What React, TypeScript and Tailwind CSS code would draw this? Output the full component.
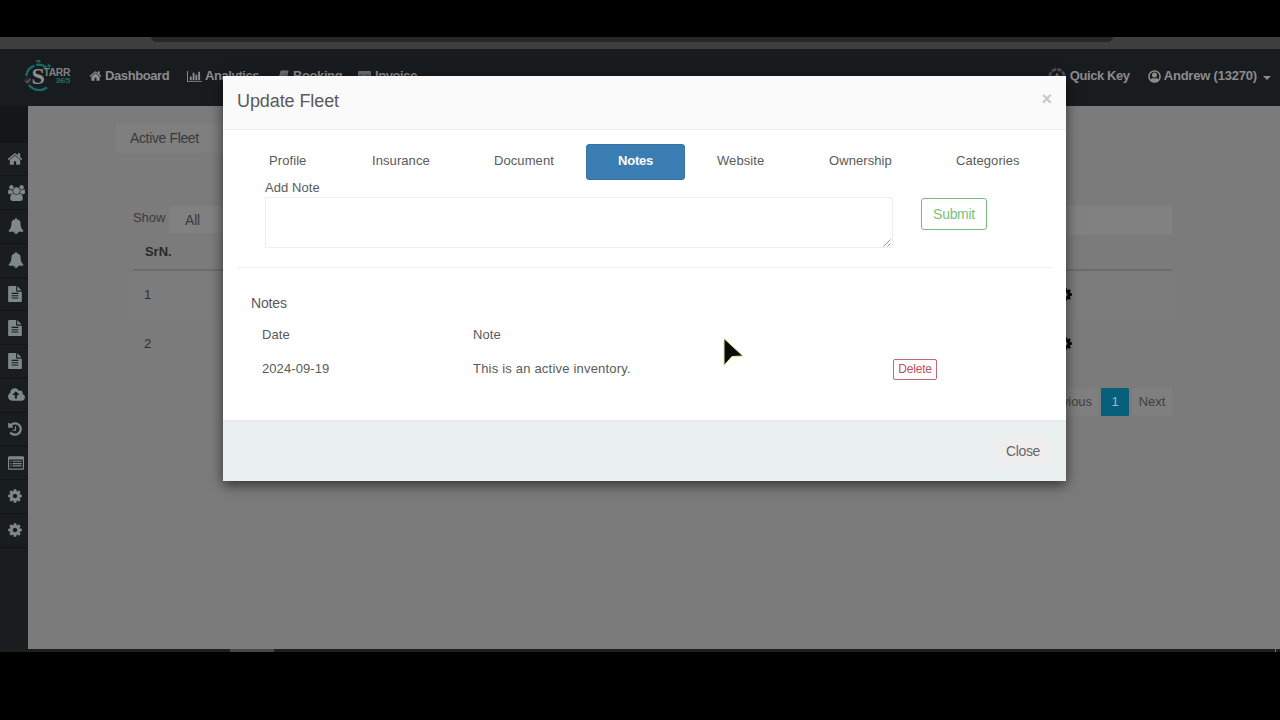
import type { ReactNode } from "react";

const HOME =
  "M1472 992v480q0 26-19 45t-45 19h-384v-384h-256v384h-384q-26 0-45-19t-19-45v-480q0-1 .5-3t.5-3l575-474 575 474q1 2 1 6zm223-69l-62 74q-8 9-21 11h-3q-13 0-21-7l-692-577-692 577q-12 8-24 7-13-2-21-11l-62-74q-8-10-7-23.5t11-21.5l719-599q32-26 76-26t76 26l244 204v-195q0-14 9-23t23-9h192q14 0 23 9t9 23v408l219 182q10 8 11 21.5t-7 23.5z";
const USERS =
  "M657 896q-162 5-265 128h-134q-82 0-138-40.5t-56-118.5q0-353 124-353 6 0 43.5 21t97.5 42.5 119 21.5q67 0 133-23-5 37-5 66 0 159 93 286zm1071 637q0 120-73 189.5t-194 69.5h-874q-121 0-194-69.5t-73-189.5q0-53 3.5-103.5t14-109 26.5-108.5 43-97.5 62-81 85.5-53.5 111.5-20q10 0 43 21.5t73 48 107 48 135 21.5 135-21.5 107-48 73-48 43-21.5q61 0 111.5 20t85.5 53.5 62 81 43 97.5 26.5 108.5 14 109 3.5 103.5zm-1024-1277q0 106-75 181t-181 75-181-75-75-181 75-181 181-75 181 75 75 181zm704 384q0 159-112.5 271.5t-271.5 112.5-271.5-112.5-112.5-271.5 112.5-271.5 271.5-112.5 271.5 112.5 112.5 271.5zm576 225q0 78-56 118.5t-138 40.5h-134q-103-123-265-128 93-127 93-286 0-29-5-66 66 23 133 23 59 0 119-21.5t97.5-42.5 43.5-21q124 0 124 353zm-128-609q0 106-75 181t-181 75-181-75-75-181 75-181 181-75 181 75 75 181z";
const BELL =
  "M912 1696q0-16-16-16-59 0-101.5-42.5t-42.5-101.5q0-16-16-16t-16 16q0 73 51.5 124.5t124.5 51.5q16 0 16-16zm816-288q0 52-38 90t-90 38h-448q0 106-75 181t-181 75-181-75-75-181h-448q-52 0-90-38t-38-90q50-42 91-88t85-119.5 74.5-158.5 50-206 19.5-260q0-152 117-282.5t307-158.5q-8-19-8-39 0-40 28-68t68-28 68 28 28 68q0 20-8 39 190 28 307 158.5t117 282.5q0 139 19.5 260t50 206 74.5 158.5 85 119.5 91 88z";
const FILE =
  "M1596 476q14 14 28 36h-472v-472q22 14 36 28zm-476 164h544v1056q0 40-28 68t-68 28h-1344q-40 0-68-28t-28-68v-1600q0-40 28-68t68-28h800v544q0 40 28 68t68 28zm160 736v-64q0-14-9-23t-23-9h-704q-14 0-23 9t-9 23v64q0 14 9 23t23 9h704q14 0 23-9t9-23zm0-256v-64q0-14-9-23t-23-9h-704q-14 0-23 9t-9 23v64q0 14 9 23t23 9h704q14 0 23-9t9-23zm0-256v-64q0-14-9-23t-23-9h-704q-14 0-23 9t-9 23v64q0 14 9 23t23 9h704q14 0 23-9t9-23z";
const CLOUD =
  "M1216 864q0-14-9-23l-352-352q-9-9-23-9t-23 9l-351 351q-10 12-10 24 0 14 9 23t23 9h224v352q0 13 9.5 22.5t22.5 9.5h192q13 0 22.5-9.5t9.5-22.5v-352h224q13 0 22.5-9.5t9.5-22.5zm640 288q0 159-112.5 271.5t-271.5 112.5h-1088q-185 0-316.5-131.5t-131.5-316.5q0-130 70-240t188-165q-2-30-2-43 0-212 150-362t362-150q156 0 285.5 87t188.5 231q71-62 166-62 106 0 181 75t75 181q0 76-41 138 130 31 213.5 135.5t83.5 238.5z";
const HISTORY =
  "M1664 896q0 156-61 298t-164 245-245 164-298 61q-172 0-327-72.5t-264-204.5q-7-10-6.5-22.5t8.5-20.5l137-138q10-9 25-9 16 2 23 12 73 95 179 147t225 52q104 0 198.5-40.5t163.5-109.5 109.5-163.5 40.5-198.5-40.5-198.5-109.5-163.5-163.5-109.5-198.5-40.5q-98 0-188 35.5t-160 101.5l137 138q31 30 14 69-17 40-59 40h-448q-26 0-45-19t-19-45v-448q0-42 40-59 39-17 69 14l130 129q107-101 244.5-156.5t284.5-55.5q156 0 298 61t245 164 164 245 61 298zm-640-288v448q0 14-9 23t-23 9h-320q-14 0-23-9t-9-23v-64q0-14 9-23t23-9h224v-352q0-14 9-23t23-9h64q14 0 23 9t9 23z";
const LIST =
  "M160 128h1472q66 0 113 47t47 113v1216q0 66-47 113t-113 47h-1472q-66 0-113-47t-47-113v-1216q0-66 47-113t113-47zm-32 384v960q0 32 32 32h1472q32 0 32-32v-960zM256 640h128v128h-128zm256 0h1024v128h-1024zM256 896h128v128h-128zm256 0h1024v128h-1024zM256 1152h128v128h-128zm256 0h1024v128h-1024z";
const COG =
  "M1152 896q0-106-75-181t-181-75-181 75-75 181 75 181 181 75 181-75 75-181zm512-109v222q0 12-8 23t-20 13l-185 28q-19 54-39 91 35 50 107 138 10 12 10 25t-9 23q-27 37-99 108t-94 71q-12 0-26-9l-138-108q-44 23-91 38-16 136-29 186-7 28-36 28h-222q-14 0-24.5-8.5t-11.5-21.5l-28-184q-49-16-90-37l-141 107q-10 9-25 9-14 0-25-11-126-114-165-168-7-10-7-23 0-12 8-23 15-21 51-66.5t54-70.5q-27-50-41-99l-183-27q-13-2-21-12.5t-8-23.5v-222q0-12 8-23t19-13l186-28q14-46 39-92-40-57-107-138-10-12-10-24 0-10 9-23 26-36 98.5-107.5t94.5-71.5q13 0 26 10l138 107q44-23 91-38 16-136 29-186 7-28 36-28h222q14 0 24.5 8.5t11.5 21.5l28 184q49 16 90 37l142-107q9-9 24-9 13 0 25 10 129 119 165 170 7 8 7 22 0 12-8 23-15 21-51 66.5t-54 70.5q26 50 41 98l183 28q13 2 21 12.5t8 23.5z";
const CHART =
  "M640 896v512h-256v-512h256zm384-512v1024h-256v-1024h256zm1024 1152v128h-2048v-1536h128v1408h1920zm-640-896v768h-256v-768h256zm384-384v1152h-256v-1152h256z";

function Glyph({ d, box = "0 0 1792 1792", className }: { d: string; box?: string; className: string }) {
  return (
    <svg viewBox={box} className={className} fill="currentColor" fillRule="evenodd" aria-hidden="true">
      <path d={d} />
    </svg>
  );
}

const SIDE = [
  { d: HOME, box: "0 0 1792 1792", size: "h-[16px] w-[16px] -ml-[1px]" },
  { d: USERS, box: "64 0 1920 1792", size: "h-[16px] w-[17px]" },
  { d: BELL, box: "0 0 1792 1792", size: "h-[16px] w-[16px]" },
  { d: BELL, box: "0 0 1792 1792", size: "h-[16px] w-[16px]" },
  { d: FILE, box: "128 0 1536 1792", size: "h-[16px] w-[14px]" },
  { d: FILE, box: "128 0 1536 1792", size: "h-[16px] w-[14px]" },
  { d: FILE, box: "128 0 1536 1792", size: "h-[16px] w-[14px]" },
  { d: CLOUD, box: "-64 0 1920 1792", size: "h-[16px] w-[17px]" },
  { d: HISTORY, box: "128 0 1536 1792", size: "h-[16px] w-[14px]" },
  { d: LIST, box: "0 0 1792 1792", size: "h-[16px] w-[16px]" },
  { d: COG, box: "128 0 1536 1792", size: "h-[16px] w-[14px]" },
  { d: COG, box: "128 0 1536 1792", size: "h-[16px] w-[14px]" },
];

function Logo() {
  return (
    <svg viewBox="0 0 50 34" className="h-[34px] w-[50px]" aria-label="Starr 365">
      <g fill="none" stroke="#176b64" strokeWidth="2.300">
        <path d="M3.2 17a13 13 0 0 1 8-10.4" />
        <path d="M13 5.8a13 13 0 0 1 10.5 2.7" />
        <path d="M6 26a13 13 0 0 0 18 2.5" />
        <path d="M13.5 2.2h4M25 5.8l2.2 2" />
      </g>
      <circle cx="4.7" cy="21.7" r="3.7" fill="#25292c" />
      <path d="M2.8 21.7l1.6 1.7 3-3.6" fill="none" stroke="#838688" strokeWidth="1" />
      <text x="8.5" y="25" fontFamily="Liberation Serif, serif" fontSize="24" fill="#8d8f90">S</text>
      <text x="20.5" y="17" fontFamily="Liberation Sans, sans-serif" fontWeight="700" fontSize="10" textLength="26.500" lengthAdjust="spacingAndGlyphs" fill="#7d8082">TARR</text>
      <text x="32.5" y="23.500" fontFamily="Liberation Sans, sans-serif" fontWeight="700" fontSize="8" textLength="14.500" lengthAdjust="spacingAndGlyphs" fill="#176b64">365</text>
    </svg>
  );
}

function NavItem({ icon, children, className }: { icon: ReactNode; children: ReactNode; className: string }) {
  return (
    <a className={`flex h-full items-center whitespace-nowrap ${className}`}>
      {icon}
      <span>{children}</span>
    </a>
  );
}

function Navbar() {
  return (
    <nav className="flex h-[57px] shrink-0 items-center bg-[#191c1f] pb-[3px] text-[13px] font-bold tracking-[-0.4px] text-[#8b8c8c]">
      <div className="ml-[23px] w-[66px]"><Logo /></div>
      <NavItem className="w-[98px] gap-[3px]" icon={<Glyph d={HOME} className="h-[14px] w-[13px]" />}>Dashboard</NavItem>
      <NavItem className="w-[91px] gap-[3px]" icon={<Glyph d={CHART} box="0 0 2048 1792" className="h-[13px] w-[15px]" />}>Analytics</NavItem>
      <NavItem
        className="w-[80px] gap-[4px]"
        icon={
          <svg viewBox="0 0 12 12" className="h-[14px] w-[11px]" aria-hidden="true">
            <path d="M3 0h8.5L9.5 9.5H1.5Q.2 9.5.7 8z" fill="#717272" />
            <path d="M4.5 3.4h5M4 5.2h5" stroke="#555" strokeWidth=".8" />
          </svg>
        }
      >
        Booking
      </NavItem>
      <NavItem
        className="gap-[4px]"
        icon={
          <svg viewBox="0 0 13 12" className="h-[12px] w-[13px]" aria-hidden="true">
            <rect y="1" width="13" height="10" rx="1" fill="#6d6e6e" />
            <path d="M1.5 5h4M7 5h4.5M1.5 7h10" stroke="#3b3d3e" />
          </svg>
        }
      >
        Invoice
      </NavItem>
      <div className="ml-auto flex h-full">
        <NavItem
          className="w-[100px] gap-[4px]"
          icon={
            <svg viewBox="0 0 20 20" className="h-[19px] w-[18px]" aria-hidden="true">
              <circle cx="10" cy="10" r="8" fill="none" stroke="#4d5052" strokeWidth="3" strokeDasharray="5 1.28" />
              <path d="M10 6.5v7M6.5 10h7" stroke="#777a7b" strokeWidth="2" />
            </svg>
          }
        >
          Quick Key
        </NavItem>
        <NavItem
          className="gap-[3px]"
          icon={
            <svg viewBox="0 0 14 14" className="h-[13px] w-[13px]" fill="currentColor" aria-hidden="true">
              <circle cx="7" cy="7" r="6" fill="none" stroke="currentColor" strokeWidth="1.7" />
              <circle cx="7" cy="5.4" r="2.7" />
              <path d="M2.6 11q.6-2.4 2.4-2.5 2 1.1 4 0 1.8.1 2.4 2.5Q9.700 13 7 13t-4.400-2z" />
            </svg>
          }
        >
          <span className="tracking-[-0.2px]">Andrew (13270)</span>
        </NavItem>
        <span className="mt-[27px] mr-[9px] ml-[6px] h-0 w-0 border-x-[4px] border-t-[4px] border-x-transparent border-t-[#8b8c8c]" />
      </div>
    </nav>
  );
}

function Sidebar() {
  return (
    <aside className="flex w-[28px] shrink-0 flex-col bg-[#191d20] text-[#7e8889]">
      <div className="h-[36.500px] shrink-0 border-b border-[#121518] bg-[#13171a]" />
      {SIDE.map((item, i) => (
        <div key={i} className="flex h-[33.75px] shrink-0 items-center border-b border-[#121518] pl-[8px]">
          <Glyph d={item.d} box={item.box} className={`shrink-0 ${item.size}`} />
        </div>
      ))}
    </aside>
  );
}

function FleetPage() {
  return (
    <main className="min-w-0 flex-1 bg-[#7b7b7b] pt-[18px] pl-[88px] text-[13px] tracking-[-0.05px] text-[#3a3a3a]">
      <div className="flex h-[29px] w-[160px] items-center bg-[#7f7f7f] pl-[14px] text-[14px] tracking-[-0.36px]">Active Fleet</div>
      <section className="ml-[17px] w-[1039px] pt-[53px]">
        <div className="flex h-[29px] items-start justify-between">
          <div className="flex">
            <label className="w-[36px] pt-[2px]">Show</label>
            <div className="flex h-[27px] w-[120px] items-center bg-[#818181] pt-px pl-[16px] text-[14px] tracking-[-0.2px]">All</div>
          </div>
          <div className="h-[29px] w-[200px] bg-[#818181]" />
        </div>
        <div className="flex h-[36px] items-center border-b-2 border-[#6c6c6c] pl-[12px] font-bold text-[#292929]">SrN.</div>
        <div className="flex h-[49px] items-center justify-between bg-[#7c7c7c] pr-[100px] pb-[2px] pl-[11px] text-[#2f2f2f]">
          <span>1</span>
          <Glyph d={COG} box="128 0 1536 1792" className="h-[15px] w-[13px] text-[#030303]" />
        </div>
        <div className="flex h-[49px] items-center justify-between pr-[100px] pb-[2px] pl-[11px] text-[#2f2f2f]">
          <span>2</span>
          <Glyph d={COG} box="128 0 1536 1792" className="h-[15px] w-[13px] text-[#030303]" />
        </div>
        <div className="mt-[19px] flex h-[28px] justify-end gap-[3px] text-[#414141]">
          <span className="flex w-[70px] items-center justify-end bg-[#7f7f7f] pr-[6px] pb-px">Previous</span>
          <span className="flex w-[28px] items-center justify-center rounded-[1px] bg-[#085f7c] pb-px text-[#a2b6bd]">1</span>
          <span className="flex w-[40px] items-center justify-center bg-[#7f7f7f] pb-px">Next</span>
        </div>
      </section>
    </main>
  );
}

const TABS = [
  { label: "Profile", box: "w-[102px] pl-[32px]" },
  { label: "Insurance", box: "w-[123px] pl-[33px]" },
  { label: "Document", box: "w-[124px] pl-[32px]" },
  { label: "Notes", box: "w-[99px] justify-center rounded-[3px] bg-[#3a7db2] font-bold text-white border border-[#3674a6] tracking-[-0.25px]" },
  { label: "Website", box: "w-[112px] pl-[32px]" },
  { label: "Ownership", box: "w-[127px] pl-[32px]" },
  { label: "Categories", box: "w-[128px] pl-[32px]" },
];

function FleetDialog() {
  return (
    <div
      role="dialog"
      className="absolute top-[76px] left-[223px] flex h-[405px] w-[843px] flex-col bg-white text-[13px] tracking-[0.08px] text-[#5a5a5a] shadow-[0_4px_12px_rgba(0,0,0,0.6)]"
    >
      <header className="flex h-[54px] shrink-0 items-start justify-between border-b border-[#ececec] bg-[#fafafa] pr-[14px] pl-[14px]">
        <h2 className="mt-[13px] text-[18px] leading-[24px] tracking-[-0.09px]">Update Fleet</h2>
        <button className="mt-[13px] text-[18px] leading-[20px] font-bold tracking-normal text-[#c8c8c8]">×</button>
      </header>
      <div className="flex h-[290px] shrink-0 flex-col px-[14px] pt-[14px]">
        <div className="flex h-[36px] shrink-0">
          {TABS.map((t) => (
            <a key={t.label} className={`flex h-[36px] shrink-0 items-center pb-[2px] ${t.box}`}>{t.label}</a>
          ))}
        </div>
        <div className="flex h-[88px] shrink-0 border-b border-[#eeeeee] pl-[28px]">
          <div className="w-[628px]">
            <label className="block h-[17px] leading-[15px]">Add Note</label>
            <div className="flex h-[51px] items-end justify-end border border-[#eeeeee]">
              <svg viewBox="0 0 9 9" className="h-[9px] w-[9px]" aria-hidden="true">
                <path d="M.5 8.500l7-7M4.500 8.500l3-3" stroke="#888" strokeWidth=".9" />
              </svg>
            </div>
          </div>
          <button className="mt-[18px] ml-[28px] flex h-[32px] w-[66px] items-center justify-center rounded-[3px] border border-[#79bd7c] pt-px text-[14px] tracking-[-0.3px] text-[#79c27c]">
            Submit
          </button>
        </div>
        <h3 className="mt-[25px] pl-[14px] text-[14px] leading-[20px] tracking-[-0.15px]">Notes</h3>
        <div className="mt-[12px] flex pl-[25px] leading-[20px]">
          <span className="w-[211px]">Date</span>
          <span>Note</span>
        </div>
        <div className="mt-[13px] flex h-[22px] items-center pl-[25px]">
          <span className="w-[211px]">2024-09-19</span>
          <span className="w-[420px] tracking-[0.2px]">This is an active inventory.</span>
          <button className="flex h-[21px] w-[44px] items-center justify-center rounded-[2px] border border-[#c4656f] text-[12px] tracking-[-0.2px] text-[#c1505b]">
            Delete
          </button>
        </div>
      </div>
      <footer className="flex flex-1 items-center justify-end border-t border-[#e3e8e8] bg-[#eaf0f0] pr-[14px]">
        <button className="flex h-[31px] w-[58px] items-center justify-center bg-[#eeeeee] pt-px text-[14px] tracking-[-0.35px] text-[#666]">Close</button>
      </footer>
    </div>
  );
}

export default function App() {
  return (
    <div className="relative flex h-[720px] w-[1280px] flex-col overflow-hidden bg-black pt-[37px] pb-[68px] font-['Liberation_Sans',Arial,sans-serif]">
      <div className="h-[12px] shrink-0 bg-[#3e3e3e] pl-[151px]">
        <div className="h-[5px] w-[962px] rounded-b-[6px] bg-[#272727]" />
      </div>
      <Navbar />
      <div className="flex min-h-0 flex-1">
        <Sidebar />
        <FleetPage />
      </div>
      <div className="flex h-[3px] shrink-0 bg-[#1d1f1f] pl-[230px]">
        <div className="w-[44px] bg-[#484848]" />
        <div className="mr-[4px] ml-auto w-px bg-[#777]" />
      </div>
      <FleetDialog />
      <svg viewBox="0 0 24 32" className="absolute top-[336px] left-[722px] h-[32px] w-[24px]" aria-hidden="true">
        <path d="M2 2.500v27l8-9 11-.500z" fill="#0b0b08" stroke="#e4ed9a" strokeWidth="1" />
      </svg>
    </div>
  );
}
